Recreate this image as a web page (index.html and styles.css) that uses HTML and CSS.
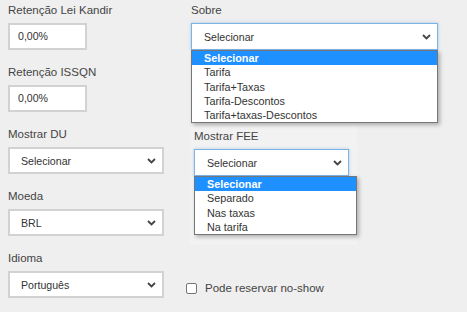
FILE: index.html
```html
<!DOCTYPE html>
<html lang="pt">

<head>
    <meta charset="UTF-8">
    <meta name="viewport" content="width=device-width, initial-scale=1.0">
    <title>Configurações</title>
    <link rel="stylesheet" href="styles.css">
</head>

<body>
    <div class="form">
        <!-- coluna esquerda -->
        <div class="col-left">
            <div class="field">
                <label>Retenção Lei Kandir</label>
                <div class="input">0,00%</div>
            </div>
            <div class="field">
                <label>Retenção ISSQN</label>
                <div class="input">0,00%</div>
            </div>
            <div class="field">
                <label>Mostrar DU</label>
                <div class="select">
                    <span>Selecionar</span>
                    <svg class="chev" width="9" height="6" viewBox="0 0 9 6"><path d="M1 1 L4.5 4.5 L8 1"/></svg>
                </div>
            </div>
            <div class="field">
                <label>Moeda</label>
                <div class="select">
                    <span>BRL</span>
                    <svg class="chev" width="9" height="6" viewBox="0 0 9 6"><path d="M1 1 L4.5 4.5 L8 1"/></svg>
                </div>
            </div>
            <div class="field">
                <label>Idioma</label>
                <div class="select">
                    <span>Português</span>
                    <svg class="chev" width="9" height="6" viewBox="0 0 9 6"><path d="M1 1 L4.5 4.5 L8 1"/></svg>
                </div>
            </div>
        </div>

        <!-- coluna direita -->
        <div class="col-right">
            <div class="field">
                <label>Sobre</label>
                <div class="select-wrap">
                    <div class="select select-wide focus">
                        <span>Selecionar</span>
                        <svg class="chev" width="9" height="6" viewBox="0 0 9 6"><path d="M1 1 L4.5 4.5 L8 1"/></svg>
                    </div>
                    <ul class="menu">
                        <li class="active">Selecionar</li>
                        <li>Tarifa</li>
                        <li>Tarifa+Taxas</li>
                        <li>Tarifa-Descontos</li>
                        <li>Tarifa+taxas-Descontos</li>
                    </ul>
                </div>
            </div>

            <div class="panel">
                <div class="field">
                    <label>Mostrar FEE</label>
                    <div class="select-wrap">
                        <div class="select select-fee focus">
                            <span>Selecionar</span>
                            <svg class="chev" width="9" height="6" viewBox="0 0 9 6"><path d="M1 1 L4.5 4.5 L8 1"/></svg>
                        </div>
                        <ul class="menu">
                            <li class="active">Selecionar</li>
                            <li>Separado</li>
                            <li>Nas taxas</li>
                            <li>Na tarifa</li>
                        </ul>
                    </div>
                </div>
            </div>

            <div class="check">
                <span class="box"></span>
                <span>Pode reservar no-show</span>
            </div>
        </div>
    </div>
</body>

</html>
```

FILE: styles.css
```css
* {
    margin: 0px;
    padding: 0px;
    box-sizing: border-box;
}

body {
    background-color: #efefef;
    font-family: "Liberation Sans", Arial, sans-serif;
    color: #444;
}

.form {
    display: flex;
    padding: 2px 0 0 8px;
}

.col-left {
    width: 156px;
    display: flex;
    flex-direction: column;
    gap: 14px;
}

.col-right {
    margin-left: 27px;
    width: 247px;
}

.field label {
    display: block;
    font-size: 11.5px;
    line-height: 16px;
    margin-bottom: 5px;
}

.input {
    width: 79px;
    height: 27px;
    background: #fff;
    border: 2px solid #d2d2d2;
    padding-left: 8px;
    font-size: 10.6px;
    line-height: 23px;
    color: #333;
}

.select {
    width: 156px;
    height: 27px;
    background: #fff;
    border: 2px solid #d2d2d2;
    padding: 0 6px 0 11px;
    display: flex;
    align-items: center;
    justify-content: space-between;
    font-size: 10.6px;
    color: #333;
}

.chev {
    fill: none;
    stroke: #444;
    stroke-width: 1.8;
}

.select-wrap {
    position: relative;
}

.select-wide {
    width: 247px;
}

.select-fee {
    width: 155px;
}

.focus {
    border: 1px solid #7db4e6;
    padding-left: 12px;
    box-shadow: 0 0 3px rgba(90, 150, 220, 0.45);
}

.menu {
    position: absolute;
    left: 0;
    top: 100%;
    width: 100%;
    list-style: none;
    background: #fff;
    border: 1px solid #767676;
    box-shadow: 2px 2px 4px rgba(0, 0, 0, 0.28);
    font-size: 10.8px;
    z-index: 2;
}

.menu li {
    height: 14.3px;
    line-height: 14.3px;
    padding-left: 12px;
    color: #333;
}

.menu li.active {
    background: #1e90ff;
    color: #fff;
    font-weight: bold;
}

.panel {
    margin-top: 76px;
    margin-left: -1px;
    width: 167px;
    height: 119px;
    padding: 2px 0 0 4px;
    background: #f2f2f2;
}

.check {
    display: flex;
    align-items: center;
    gap: 8px;
    margin-top: 35px;
    margin-left: -5px;
    font-size: 11.5px;
    line-height: 16px;
}

.check .box {
    width: 11px;
    height: 11px;
    border: 1px solid #767676;
    border-radius: 2px;
    background: #fff;
}
```
